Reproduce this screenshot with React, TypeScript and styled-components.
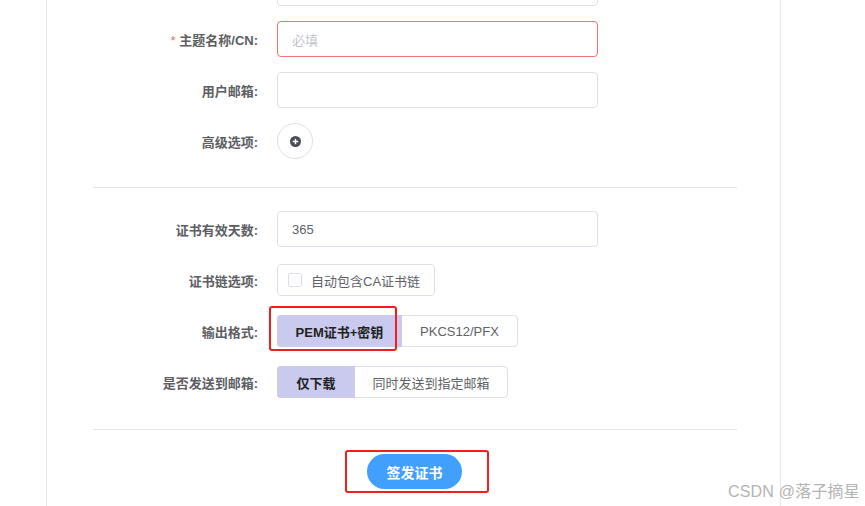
import React from "react";
import styled, { createGlobalStyle } from "styled-components";

const Global = createGlobalStyle`
  html, body { margin: 0; padding: 0; background: #fff; overflow: hidden; }
  body { font-family: "Liberation Sans", "Noto Sans CJK SC", sans-serif; }
`;

const Page = styled.div`
  position: relative;
  width: 865px;
  height: 506px;
  overflow: hidden;
  background: #fff;
`;

const Card = styled.div`
  display: flow-root;
  margin-left: 46px;
  width: 735px;
  height: 506px;
  border-left: 1px solid #e6e6ee;
  border-right: 1px solid #e6e6ee;
  padding: 0 43px 0 46px;
  box-sizing: border-box;
`;

const Form = styled.div`
  margin-top: -30px;
  display: flex;
  flex-direction: column;
`;

const Section = styled.div`
  display: flex;
  flex-direction: column;
  gap: 15px;
`;

const Row = styled.div`
  display: flex;
  align-items: center;
  height: 36px;
`;

const Label = styled.div<{ $required?: boolean }>`
  width: 184px;
  box-sizing: border-box;
  padding-right: 19px;
  text-align: right;
  font-size: 13px;
  font-weight: 700;
  color: #5c5e63;
  &::before {
    content: ${(p) => (p.$required ? '"* "' : '""')};
    color: #f56c6c;
    font-weight: 400;
  }
`;

const Input = styled.div<{ $error?: boolean; $placeholder?: boolean }>`
  width: 321px;
  height: 36px;
  box-sizing: border-box;
  border: 1px solid ${(p) => (p.$error ? "#f27474" : "#dfe0e8")};
  border-radius: 4px;
  padding-left: 14px;
  display: flex;
  align-items: center;
  font-size: 13px;
  color: ${(p) => (p.$placeholder ? "#c0c4cc" : "#606266")};
`;

const CircleButton = styled.div`
  width: 36px;
  height: 36px;
  box-sizing: border-box;
  border: 1px solid #dfe0e8;
  border-radius: 50%;
  display: flex;
  align-items: center;
  justify-content: center;
`;

const Divider = styled.div<{ $above: number; $below: number }>`
  height: 1px;
  background: #e3e3ec;
  margin: ${(p) => `${p.$above}px 0 ${p.$below}px`};
`;

const CheckGroup = styled.div`
  height: 32px;
  width: 158px;
  box-sizing: border-box;
  border: 1px solid #dfe0e8;
  border-radius: 4px;
  display: flex;
  align-items: center;
  padding-left: 10px;
  gap: 9px;
  font-size: 13px;
  color: #606266;
`;

const CheckBox = styled.span`
  width: 12px;
  height: 12px;
  border: 1px solid #dcdfe6;
  border-radius: 2px;
`;

const Segmented = styled.div`
  position: relative;
  display: flex;
  height: 32px;
  box-sizing: border-box;
  border: 1px solid #dfe0e8;
  border-radius: 4px;
`;

const Segment = styled.div<{ $active?: boolean; $w: number }>`
  width: ${(p) => p.$w}px;
  display: flex;
  align-items: center;
  justify-content: center;
  font-size: 13px;
  background: ${(p) => (p.$active ? "#cacaee" : "transparent")};
  color: ${(p) => (p.$active ? "#222" : "#606266")};
  font-weight: ${(p) => (p.$active ? 700 : 400)};
  margin: ${(p) => (p.$active ? "-1px 0 -1px -1px" : "0")};
  border-radius: ${(p) => (p.$active ? "4px 0 0 4px" : "0")};
`;

const Mark = styled.div<{ $l: number; $t: number; $w: number; $h: number }>`
  position: absolute;
  left: ${(p) => p.$l}px;
  top: ${(p) => p.$t}px;
  width: ${(p) => p.$w}px;
  height: ${(p) => p.$h}px;
  box-sizing: border-box;
  border: 2px solid #f21d1d;
  border-radius: 3px;
  pointer-events: none;
`;

const Footer = styled.div`
  display: flex;
  justify-content: center;
  padding-right: 1px;
`;

const SubmitWrap = styled.div`
  position: relative;
`;

const Submit = styled.div`
  width: 95px;
  height: 35px;
  border-radius: 18px;
  background: #419ffd;
  color: #fff;
  font-size: 14px;
  font-weight: 700;
  display: flex;
  align-items: center;
  justify-content: center;
`;

const Watermark = styled.div`
  position: absolute;
  right: 5px;
  bottom: 4px;
  font-size: 16px;
  color: #b4b4b4;
  letter-spacing: 0.2px;
`;

export default function App() {
  return (
    <Page>
      <Global />
      <Card>
        <Form>
          <Section>
            <Row>
              <Label />
              <Input />
            </Row>
            <Row>
              <Label $required>主题名称/CN:</Label>
              <Input $error $placeholder>必填</Input>
            </Row>
            <Row>
              <Label>用户邮箱:</Label>
              <Input />
            </Row>
            <Row>
              <Label>高级选项:</Label>
              <CircleButton>
                <svg width="11" height="11" viewBox="0 0 12 12">
                  <circle cx="6" cy="6" r="6" fill="#4a4d55" />
                  <path d="M6 3v6M3 6h6" stroke="#fff" strokeWidth="1.6" />
                </svg>
              </CircleButton>
            </Row>
          </Section>
          <Divider $above={28} $below={23} />
          <Section>
            <Row>
              <Label>证书有效天数:</Label>
              <Input>365</Input>
            </Row>
            <Row>
              <Label>证书链选项:</Label>
              <CheckGroup>
                <CheckBox />
                自动包含CA证书链
              </CheckGroup>
            </Row>
            <Row>
              <Label>输出格式:</Label>
              <Segmented>
                <Segment $active $w={125}>PEM证书+密钥</Segment>
                <Segment $w={115}>PKCS12/PFX</Segment>
                <Mark $l={-9} $t={-10} $w={128} $h={45} />
              </Segmented>
            </Row>
            <Row>
              <Label>是否发送到邮箱:</Label>
              <Segmented>
                <Segment $active $w={78}>仅下载</Segment>
                <Segment $w={152}>同时发送到指定邮箱</Segment>
              </Segmented>
            </Row>
          </Section>
          <Divider $above={29} $below={24} />
          <Footer>
            <SubmitWrap>
              <Submit>签发证书</Submit>
              <Mark $l={-22} $t={-4} $w={144} $h={43} />
            </SubmitWrap>
          </Footer>
        </Form>
      </Card>
      <Watermark>CSDN @落子摘星</Watermark>
    </Page>
  );
}
